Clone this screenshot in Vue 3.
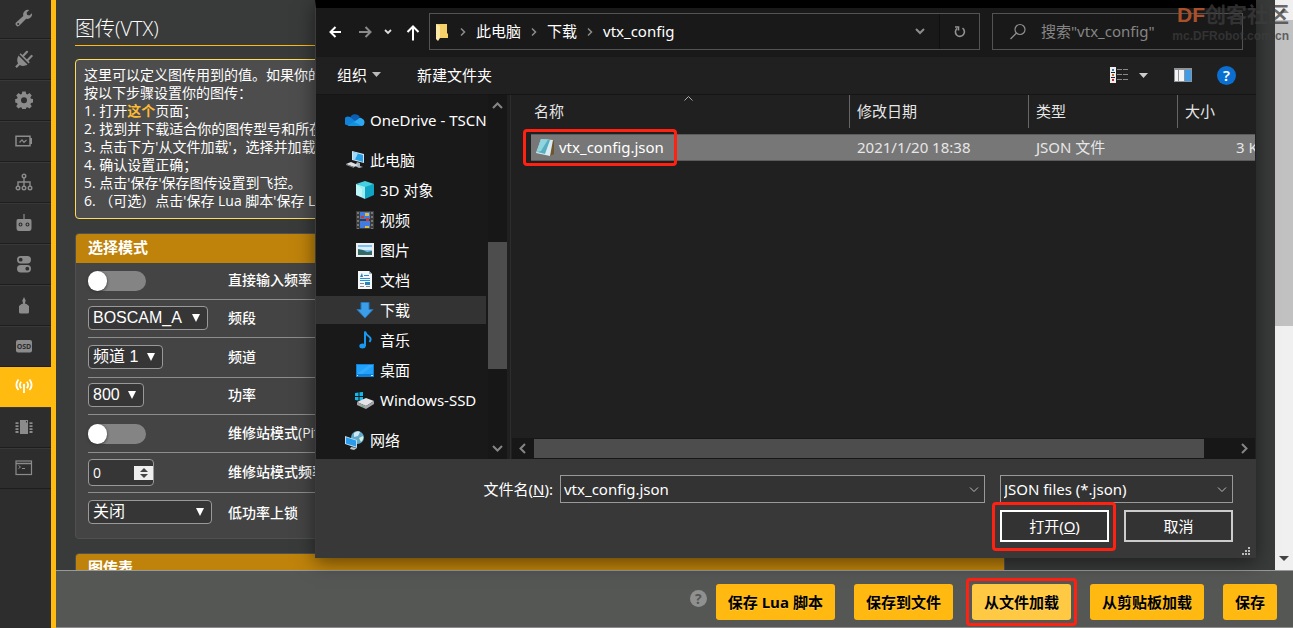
<script setup>
import { ref } from 'vue'

const tabs = ['wrench', 'plug', 'gear', 'battery', 'tree', 'robot', 'switches', 'servo', 'osd', 'antenna', 'chip', 'console']
const activeTab = ref('antenna')

const band = ref('BOSCAM_A')
const channel = ref('频道 1')
const power = ref('800')
const lowPower = ref('关闭')
const pitFreq = ref(0)
const directFreq = ref(false)
const pitMode = ref(false)

const places = [
  { icon: 'cloud', text: 'OneDrive - TSCN', kind: 'root' },
  { icon: 'pc', text: '此电脑', kind: 'root' },
  { icon: 'cube', text: '3D 对象' },
  { icon: 'film', text: '视频' },
  { icon: 'picture', text: '图片' },
  { icon: 'doc', text: '文档' },
  { icon: 'down', text: '下载', kind: 'selected' },
  { icon: 'music', text: '音乐' },
  { icon: 'desktop', text: '桌面' },
  { icon: 'drive', text: 'Windows-SSD' },
  { icon: 'network', text: '网络', kind: 'root' }
]
const fileName = ref('vtx_config.json')
</script>

<template>
  <div class="app">
    <nav class="sidebar">
      <button v-for="t in tabs" :key="t" class="tab" :class="{ active: t === activeTab }" :aria-label="t" @click="activeTab = t">
        <svg v-if="t === 'wrench'" width="18" height="18" viewBox="0 0 18 18"><path fill="currentColor" d="M17 4.2 14.3 6.500 12 5.800 11.700 3.500 14.300 1A4.800 4.800 0 0 0 8.300 6.900L1.300 13.300A2.200 2.200 0 0 0 4.500 16.600L11.200 9.800A4.800 4.800 0 0 0 17 4.200ZM3.200 14a1 1 0 1 1 0 2 1 1 0 0 1 0-2Z" /></svg>
        <svg v-else-if="t === 'plug'" width="18" height="18" viewBox="0 0 18 18"><path fill="currentColor" d="M3.500 5.500 12.500 14.500C9.500 16.500 6.500 16 4.800 15L1.800 18 0.200 16.400 3 13.400C1.800 11 2 8 3.500 5.500ZM4.500 4.300 5.700 3.200 14.800 12.300 13.600 13.500Z" /><path stroke="currentColor" stroke-width="2.200" stroke-linecap="round" d="M8 6 12 1.800M12.500 10.200 16.600 6" /></svg>
        <svg v-else-if="t === 'gear'" width="18" height="18" viewBox="0 0 18 18"><path fill="currentColor" fill-rule="evenodd" d="M7.300 0.500h3.400l.4 2.300 1.400.6 2-1.400 2.300 2.400-1.400 1.900.6 1.400 2.300.4v3.400l-2.300.4-.6 1.400 1.400 1.900-2.300 2.400-2-1.400-1.400.6-.4 2.300H7.300l-.4-2.300-1.400-.6-2 1.400-2.300-2.400 1.400-1.900-.6-1.400-1.800-.4V8.100L2 7.700l.6-1.400-1.400-1.900L3.500 2l2 1.400 1.400-.6ZM9 6.300a3 3 0 1 0 0 6 3 3 0 0 0 0-6Z" /></svg>
        <svg v-else-if="t === 'battery'" width="18" height="12" viewBox="0 0 18 12"><path fill="none" stroke="currentColor" stroke-width="1.500" d="M1 1.200H15V10.800H1Z" /><path fill="currentColor" d="M15 3h2v6h-2z" /><path fill="none" stroke="currentColor" stroke-width="1.200" d="M4.500 7.500 7 4.800 9 7.300 11.500 5" /></svg>
        <svg v-else-if="t === 'tree'" width="18" height="18" viewBox="0 0 18 18" fill="none" stroke="currentColor" stroke-width="1.400"><circle cx="9" cy="3" r="1.800" /><circle cx="3" cy="15" r="1.800" /><circle cx="9" cy="15" r="1.800" /><circle cx="15" cy="15" r="1.800" /><path d="M9 5v8M3 13V9h12v4" /></svg>
        <svg v-else-if="t === 'robot'" width="16" height="20" viewBox="0 0 16 20"><path fill="currentColor" fill-rule="evenodd" d="M7.400 1h1.200v5H14q1.500 0 1.500 2v7q0 3-2.500 3H3q-2.500 0-2.500-3V8Q.5 6 2 6h5.400ZM4.500 9.500a2 2 0 1 0 0 4 2 2 0 0 0 0-4Zm7 0a2 2 0 1 0 0 4 2 2 0 0 0 0-4Z" /><circle cx="4.500" cy="11.500" r=".9" fill="currentColor" /><circle cx="11.500" cy="11.500" r=".9" fill="currentColor" /></svg>
        <svg v-else-if="t === 'switches'" width="16" height="18" viewBox="0 0 16 18"><rect x="1" y="1" width="14" height="7.500" rx="3.700" fill="currentColor" /><rect x="1" y="10" width="14" height="7.500" rx="3.700" fill="currentColor" /><circle cx="4.700" cy="4.700" r="1.900" fill="#2d2d2d" /><circle cx="11.300" cy="13.700" r="1.900" fill="#2d2d2d" /></svg>
        <svg v-else-if="t === 'servo'" width="14" height="18" viewBox="0 0 14 18"><path fill="currentColor" d="M5.800 8V5.200H5L7 1l2 4.200h-.8V8h1.300l2.500 2v6q0 1.500-1.500 1.500h-7Q2 17.500 2 16v-6L4.500 8Z" /></svg>
        <svg v-else-if="t === 'osd'" width="18" height="14" viewBox="0 0 18 14"><rect x="1" y="1" width="16" height="12.500" rx="2" fill="currentColor" /><text x="9" y="10" text-anchor="middle" class="osd">OSD</text></svg>
        <svg v-else-if="t === 'antenna'" width="18" height="16" viewBox="0 0 18 16" fill="none" stroke="currentColor" stroke-width="1.800"><circle cx="9" cy="7" r="1.200" fill="currentColor" stroke="none" /><path d="M9 7v8M6.200 10.300Q3.500 7 6.200 3.700M11.800 10.300Q14.500 7 11.800 3.700M3.500 12Q-.8 7 3.500 1.500M14.500 12Q18.800 7 14.500 1.500" /></svg>
        <svg v-else-if="t === 'chip'" width="18" height="16" viewBox="0 0 18 16"><path fill="currentColor" fill-rule="evenodd" d="M5 1h8v14H5ZM11 2v1.500h1V2Z" /><path stroke="currentColor" stroke-width="1.800" d="M.5 4.200h3M.5 7.200h3M.5 10.200h3M.5 13h3M14.500 4.200h3M14.500 7.200h3M14.500 10.200h3M14.500 13h3" /></svg>
        <svg v-else width="18" height="16" viewBox="0 0 18 16" fill="none" stroke="currentColor"><rect x="1" y="1" width="15.500" height="13.500" stroke-width="1.200" /><path d="M1 3.500h15.500" stroke-width="1.500" /><path d="M3.500 5.500 5.500 7 3.500 8.500M7 8.500h3" /></svg>
      </button>
    </nav>

    <div class="column">
      <div class="view">
        <main class="content">
          <h1>图传(VTX)</h1>
          <div class="note">
            这里可以定义图传用到的值。如果你的图传支持<br />
            按以下步骤设置你的图传：<br />
            1. 打开<a href="#">这个</a>页面；<br />
            2. 找到并下载适合你的图传型号和所在地区的配置<br />
            3. 点击下方'从文件加载'，选择并加载图传设置<br />
            4. 确认设置正确；<br />
            5. 点击'保存'保存图传设置到飞控。<br />
            6. （可选）点击'保存 Lua 脚本'保存 Lua 设置
          </div>

          <section class="panel">
            <h2>选择模式</h2>
            <div class="rows">
              <div class="row short">
                <span class="ctl"><input id="direct" v-model="directFreq" type="checkbox" class="toggle" /></span>
                <label for="direct">直接输入频率</label>
              </div>
              <div class="row">
                <span class="ctl"><span class="pick band"><select id="band" v-model="band"><option>BOSCAM_A</option></select><svg width="8" height="8"><path d="M0 0h8L4 8z" fill="#fff" /></svg></span></span>
                <label for="band">频段</label>
              </div>
              <div class="row tall">
                <span class="ctl"><span class="pick channel"><select id="channel" v-model="channel"><option>频道 1</option></select><svg width="8" height="8"><path d="M0 0h8L4 8z" fill="#fff" /></svg></span></span>
                <label for="channel">频道</label>
              </div>
              <div class="row short">
                <span class="ctl"><span class="pick power"><select id="power" v-model="power"><option>800</option></select><svg width="8" height="8"><path d="M0 0h8L4 8z" fill="#fff" /></svg></span></span>
                <label for="power">功率</label>
              </div>
              <div class="row">
                <span class="ctl"><input id="pit" v-model="pitMode" type="checkbox" class="toggle" /></span>
                <label for="pit">维修站模式(Pit Mode)</label>
              </div>
              <div class="row tall">
                <span class="ctl"><span class="number"><input id="pitfreq" v-model="pitFreq" type="number" /><span class="spin"><svg width="8" height="10"><path d="M0 4 4 0l4 4zM0 6h8L4 10z" fill="#444" /></svg></span></span></span>
                <label for="pitfreq">维修站模式频率</label>
              </div>
              <div class="row last">
                <span class="ctl"><span class="pick low"><select id="low" v-model="lowPower"><option>关闭</option></select><svg width="8" height="8"><path d="M0 0h8L4 8z" fill="#fff" /></svg></span></span>
                <label for="low">低功率上锁</label>
              </div>
            </div>
          </section>

          <section class="panel">
            <h2>图传表</h2>
          </section>
        </main>
        <div class="scroll">
          <span class="cap"><svg width="10" height="5"><path d="M0 5h10L5 0z" fill="#8c8c8c" /></svg></span>
          <span class="thumb"></span>
          <span class="cap end"><svg width="10" height="5"><path d="M0 0h10L5 5z" fill="#444" /></svg></span>
        </div>
      </div>

      <footer class="footer">
        <span class="help">?</span>
        <button>保存 Lua 脚本</button>
        <button>保存到文件</button>
        <button class="hot">从文件加载<i class="mark"></i></button>
        <button>从剪贴板加载</button>
        <button>保存</button>
      </footer>
    </div>

    <div class="dialog" role="dialog" aria-label="vtx_config">
      <div class="address">
        <div class="arrows">
          <svg width="84" height="20" viewBox="0 0 84 20" fill="none" stroke="#fff" stroke-width="2"><path d="M12 10H1.500M6.500 5l-5 5 5 5" /></svg>
          <svg class="nav-rest" width="84" height="20" viewBox="0 0 84 20" fill="none" stroke-width="2"><path stroke="#8a8a8a" d="M0 10h11.500M6.500 5l5 5-5 5" /><path stroke="#ddd" stroke-width="1.800" d="M26 8l3 3 3-3" /><path stroke="#fff" d="M54 18.500V5M48.500 10l5.500-5.500 5.500 5.500" /></svg>
        </div>
        <div class="path">
          <svg class="folder" width="14" height="18" viewBox="0 0 14 18"><path fill="#f5cf68" d="M1 1h11v9l1 1v4H4z" /><path fill="#ffe9a6" d="M1 1l4 2v12l-2 3-2-2z" /></svg>
          <svg class="sep" width="6" height="8"><path d="M1 .5 4.500 4 1 7.500" /></svg><span>此电脑</span>
          <svg class="sep" width="6" height="8"><path d="M1 .5 4.500 4 1 7.500" /></svg><span>下载</span>
          <svg class="sep" width="6" height="8"><path d="M1 .5 4.500 4 1 7.500" /></svg><span class="here">vtx_config</span>
          <svg width="10" height="7" fill="none" stroke="#8c8c8c" stroke-width="2"><path d="M1 1l4 4 4-4" /></svg>
          <button class="refresh" aria-label="refresh"><svg width="12" height="13" viewBox="0 0 12 13" fill="none" stroke="#929292" stroke-width="1.600"><path d="M8.500 3.200A4.500 4.500 0 1 1 3.200 3.300" /><path d="M1 2h3.500v3.500" /></svg></button>
        </div>
        <div class="search">
          <svg width="18" height="18" viewBox="0 0 18 18" fill="none" stroke="#8f8f8f" stroke-width="1.200"><circle cx="11" cy="6.500" r="5" /><path d="M7.500 10 1.500 16" /></svg>
          <input type="text" aria-label="search" placeholder="搜索&quot;vtx_config&quot;" />
        </div>
      </div>

      <div class="tools">
        <button class="org">组织 <svg width="9" height="5"><path d="M0 0h9L4.500 5z" fill="#bbb" /></svg></button>
        <button>新建文件夹</button>
        <span class="grow"></span>
        <svg width="18" height="16" viewBox="0 0 18 16"><path fill="#eee" d="M0 0h6v16H0z" /><path fill="#202020" d="M1 5h4v1H1zM1 10h4v1H1z" /><path fill="#3c78a8" d="M2 2h2v2H2z" /><path fill="#b06a2c" d="M2 7h2v2H2z" /><path fill="#c22" d="M2 12h2v2H2z" /><path stroke="#888" stroke-dasharray="5 1" d="M7 2.500h11M7 7.500h11M7 12.500h11" /></svg>
        <svg class="view-caret" width="9" height="5"><path d="M0 0h9L4.500 5z" fill="#ccc" /></svg>
        <svg class="pane" width="18" height="14" viewBox="0 0 18 14"><path fill="#8f9498" d="M0 0h18v14H0z" /><path fill="#f4f4f4" d="M1 2h3v11H1zM5 2h5v11H5z" /><path fill="#3f9ce8" d="M11 2h6v11h-6z" /></svg>
        <span class="q">?</span>
      </div>

      <div class="browser">
        <div class="places">
          <a v-for="p in places" :key="p.text" href="#" class="place" :class="p.kind">
            <svg width="20" height="20" viewBox="0 0 20 20">
              <g v-if="p.icon === 'cloud'"><path fill="#0a5fb4" d="M5 8a5.500 5.500 0 0 1 10-1l-6 6-7 2z" /><path fill="#1182d8" d="M1 15A4.200 4.200 0 0 1 5 7l9 7z" /><path fill="#2ea8f0" d="M3 16l10-7q2-2 4-.5A4 4 0 0 1 17 16z" /><path fill="#1490df" d="M2 15q1 1 3 1h12l-8-4z" /></g>
              <g v-else-if="p.icon === 'pc'"><path fill="#d6e4ef" d="M7 1l12 3v9L7 10z" /><path fill="#249fe8" d="M8 2l10 3v7L8 9z" /><path fill="#9ed9fb" d="M8 2l5 1.500L10 9.500 8 9z" /><path fill="#aeb6bc" d="M12 12l3 1v3l3 1-4 1-4-2z" /><path fill="#dce1e4" d="M1 14l5-2 7 3-4 2z" /><path fill="#7e878d" d="M1 14l8 3v1l-8-3z" /></g>
              <g v-else-if="p.icon === 'cube'"><path fill="#9deef0" d="M1 4l9 2v13l-9-4z" /><path fill="#10a5c3" d="M19 4l-9 2v13l9-4z" /><path fill="#45cfe0" d="M1 4l9-3 9 3-9 3z" /><path fill="#d2fbfa" d="M1 4l6 5v8l-6-2z" opacity=".6" /></g>
              <g v-else-if="p.icon === 'film'"><path fill="#3c3c3c" d="M1 1h18v18H1z" /><path fill="#3f7be0" d="M5 2h10v7H5zM5 11h10v7H5z" /><path fill="#e8bb2c" d="M10 3h4v3h-4zM10 16h4v2h-4z" /><path fill="#d33b2e" d="M6 6h3v2H6zM11 8h3v3h-3z" /><path stroke="#8a8a8a" stroke-width="1.500" stroke-dasharray="2 2" d="M3 2v17M17 2v17" /></g>
              <g v-else-if="p.icon === 'picture'"><path fill="#eee" d="M1 3h18v14H1z" /><path fill="#7cc3f3" d="M3 5h14v10H3z" /><path fill="#dceefa" d="M3 7h14v3H3z" /><path fill="#326a68" d="M3 9l5 1 4 2 5-1v4H3z" /></g>
              <g v-else-if="p.icon === 'doc'"><path fill="#f4f6f8" d="M3 1h11l3 3v15H3z" /><path fill="#a9b6c0" d="M14 1l3 3h-3z" /><path stroke="#2591dc" d="M5 8.500h10M5 10.500h10M9 5.500h5" /><path stroke="#888" d="M5 13.500h4M5 16.500h4M11 16.500h4" /><path fill="#2a82bb" d="M10 12h5v3h-5zM5 7l2-4 1 4z" /></g>
              <g v-else-if="p.icon === 'down'"><path fill="#3c9ee9" stroke="#2277bb" d="M6 2.500h8v7h4L10 18 2 9.500h4z" /></g>
              <g v-else-if="p.icon === 'music'"><ellipse cx="7.500" cy="16" rx="3.200" ry="2.500" fill="#1799f2" /><path fill="none" stroke="#1799f2" stroke-width="2" d="M10 16V1.500q1 3 4 5t.5 5.500" /></g>
              <g v-else-if="p.icon === 'desktop'"><path fill="#0d7fd6" d="M1 4h18v13H1z" /><path fill="#22a1fa" d="M2 5h16v9H2z" /><path fill="#45b2ff" d="M2 14 14 5h4v1L7 14z" opacity=".5" /><path stroke="#cde8ff" d="M2 15.500h1M16 15.500h2" /></g>
              <g v-else-if="p.icon === 'drive'"><path fill="#15b8ea" d="M0 3l3.500-.5V6H0zM4.500 2.300 8 2v4H4.500zM0 7h3.500v3.500L0 10zM4.500 7H8v4l-3.500-.5z" /><path fill="#e2e4e6" d="M2 12l9-4 8 3-8 5z" /><path fill="#a2a6a9" d="M2 12l9 4v3l-9-4zM11 16l8-5v3l-8 5z" /><path fill="#35d04a" d="M7 15.500l2 1v1l-2-1z" /></g>
              <g v-else><circle cx="12.500" cy="7.500" r="6.500" fill="#62a8c8" /><path fill="#cdeaf2" d="M9 3q4-3 6-1l-2 4-4 1z" /><path fill="#d4f0dc" d="M14 8l4-2q1 3-2 6z" /><path fill="#b9dff8" d="M0 6l12 4v8L0 14z" /><path fill="#2a9ceb" d="M1 7.300l10 3.300v6L1 13.500z" /><path fill="#bfc6ca" d="M6 17l6 1-3 2-4-1z" /></g>
            </svg>
            <span>{{ p.text }}</span>
          </a>
        </div>
        <div class="vbar">
          <svg width="11" height="7" fill="none" stroke="#858585" stroke-width="2"><path d="M1 6l4.500-4.500L10 6" /></svg>
          <span></span>
          <svg width="11" height="7" fill="none" stroke="#858585" stroke-width="2"><path d="M1 1l4.500 4.500L10 1" /></svg>
        </div>
        <div class="files">
          <div class="table-box">
            <table>
              <colgroup><col class="c-name" /><col class="c-date" /><col class="c-type" /><col /></colgroup>
              <thead>
                <tr><th>名称<svg class="sort" width="9" height="5" fill="none" stroke="#aaa"><path d="M.5 4.500l4-4 4 4" /></svg></th><th>修改日期</th><th>类型</th><th>大小</th></tr>
              </thead>
              <tbody>
                <tr>
                  <td class="name"><svg width="20" height="20" viewBox="0 0 20 20"><path fill="#70552b" d="M17 3l2 1v13l-4 2z" /><path fill="#d7ecf2" d="M6 2l12 1-3 16-14-3z" /><path fill="#58aebf" d="M6 2l9 1-5 14-8-2z" /><path fill="#8fd5df" d="M6 2l7 .5L6 14l-4 1z" /></svg>vtx_config.json<i class="mark"></i></td>
                  <td>2021/1/20 18:38</td>
                  <td>JSON 文件</td>
                  <td class="size">3 KB</td>
                </tr>
              </tbody>
            </table>
          </div>
          <div class="hbar">
            <svg width="7" height="11" fill="none" stroke="#858585" stroke-width="2"><path d="M6 1 1.500 5.500 6 10" /></svg>
            <span></span>
            <svg width="7" height="11" fill="none" stroke="#858585" stroke-width="2"><path d="M1 1l4.500 4.500L1 10" /></svg>
          </div>
        </div>
      </div>

      <div class="bottom">
        <div class="line">
          <label for="fname">文件名(<u>N</u>):</label>
          <span class="box"><input id="fname" v-model="fileName" type="text" /><svg width="10" height="6" fill="none" stroke="#bbb"><path d="M1 .5l4 4 4-4" /></svg></span>
          <span class="box type"><select aria-label="type"><option>JSON files (*.json)</option></select><svg width="10" height="6" fill="none" stroke="#bbb"><path d="M1 .5l4 4 4-4" /></svg></span>
        </div>
        <div class="line acts">
          <button class="open">打开(<u>O</u>)<i class="mark"></i></button>
          <button>取消</button>
        </div>
        <svg class="grip" width="9" height="9"><path fill="#bbb" d="M6 0h2v2H6zM3 3h2v2H3zM6 3h2v2H6zM0 6h2v2H0zM3 6h2v2H3zM6 6h2v2H6z" /></svg>
      </div>
    </div>

    <div class="stamp">
      <div class="big"><b>DF</b>创客社区</div>
      <div class="small">mc.DFRobot.com.cn</div>
    </div>
  </div>
</template>

<style>
body { margin: 0; background: #393b3a; }
</style>

<style scoped>
.app, .app * { box-sizing: border-box; }
.app {
  position: relative;
  display: flex;
  height: 100vh;
  overflow: hidden;
  color: #fff;
  font-family: "Open Sans", "Noto Sans CJK SC", sans-serif;
  font-size: 14px;
}
button, input, select { font: inherit; color: inherit; border: 0; margin: 0; padding: 0; background: none; }
svg { display: block; flex: none; }
i.mark { position: absolute; border: 3px solid #ff2112; border-radius: 4px; pointer-events: none; }

.sidebar { width: 56px; flex: none; background: #2d2d2d; border-right: 5px solid #ffbb10; }
.tab {
  display: flex; align-items: center; justify-content: center;
  width: 100%; height: 41px; padding: 0 3px 2px 0;
  color: #8b8b8b; border-top: 1px solid #383838; border-bottom: 1px solid #1e1e1e;
}
.tab:first-child { height: 39px; padding-bottom: 2px; border-top: 0; }
.tab.active { height: 40px; background: #ffbb10; color: #fff; border-color: #ffbb10; }
.osd { font: bold 7px "Open Sans", sans-serif; fill: #2d2d2d; }

.column { flex: 1; min-width: 0; display: flex; flex-direction: column; }
.view { flex: 1; min-height: 0; display: flex; }
.content { flex: 1; min-width: 0; overflow: hidden; padding: 12px 19px 0; background: #393b3a; }
h1 { margin: 0 0 13px; height: 34px; line-height: 33px; font-size: 20px; font-weight: 300; border-bottom: 1px solid #ffbb10; }
.note {
  height: 160px; padding: 6px 8px; margin-bottom: 14px; overflow: hidden;
  line-height: 18px; white-space: nowrap;
  background: #4d4d4d; border: 1px solid #ffdb5c; border-radius: 4px;
}
.note a { color: #ffbb33; font-weight: 700; text-decoration: none; }

.panel { width: calc(100% - 251px); margin-bottom: 14px; background: #434443; border: 1px solid #4f504f; border-radius: 4px; overflow: hidden; }
h2 { margin: 0; padding: 0 12px; height: 29px; line-height: 27px; font-size: 15px; font-weight: 700; background: #bf830b; }
.rows { padding: 0 12px; }
.row { display: flex; align-items: center; height: 38px; border-bottom: 1px solid #8c8d8c; }
.row.short { height: 37px; }
.row.tall { height: 40px; }
.row.last { height: 45px; padding-bottom: 5px; border: 0; }
.ctl { width: 140px; flex: none; }
.row label { margin-bottom: 2px; white-space: nowrap; line-height: 20px; font-weight: 500; }
.row.last label { margin-bottom: 0; }
.toggle { appearance: none; display: block; width: 58px; height: 20px; border-radius: 10px; background: #848484; position: relative; }
.toggle::before { content: ""; display: block; width: 19px; height: 20px; border-radius: 10px; background: #fff; box-shadow: 0 1px 3px #333; }
.toggle:checked { background: #ffbb10; }
.pick { position: relative; display: block; height: 24px; margin-bottom: 2px; }
.pick select {
  appearance: none; display: block; width: 100%; height: 100%; padding: 0 4px;
  font: 16px/22px "Liberation Sans", "Noto Sans CJK SC", sans-serif;
  background: #363636; border: 1px solid #999; border-radius: 4px;
}
.pick svg { position: absolute; right: 8px; top: 8px; pointer-events: none; }
.band { width: 120px; }
.channel { width: 75px; }
.power { width: 56px; }
.low { width: 124px; }
.number { display: flex; align-items: center; width: 66px; height: 27px; background: #363636; border: 1px solid #999; border-radius: 4px; }
.number input { flex: 1; min-width: 0; padding-left: 4px; appearance: textfield; }
.number input::-webkit-inner-spin-button { appearance: none; }
.spin { display: flex; align-items: center; justify-content: center; width: 19px; height: 14px; background: #eee; }

.scroll { width: 18px; flex: none; display: flex; flex-direction: column; background: #f0f0f0; }
.cap { height: 20px; display: flex; align-items: center; justify-content: center; }
.cap.end { margin-top: auto; height: 24px; }
.thumb { height: 306px; background: #c1c1c1; }

.footer {
  position: relative; display: flex; align-items: center; justify-content: flex-end; gap: 19px;
  height: 58px; flex: none; padding: 6px 16px 0 0;
  background: #555755; border-top: 1px solid #989998; border-bottom: 1px solid #8c8c8c;
}
.footer button {
  position: relative; height: 36px; padding: 0 12px 2px; white-space: nowrap;
  font-size: 15px; font-weight: 700; color: #000; background: #ffb910; border-radius: 3px;
  text-shadow: 0 1px rgba(255, 255, 255, .25);
}
.footer .hot { background: #ffc943; }
.hot .mark { inset: -6px; }
.help { width: 17px; height: 17px; margin: 0 -10px 7px 0; border-radius: 9px; background: #8f908f; color: #555755; font-weight: 700; line-height: 17px; text-align: center; }

.dialog {
  position: absolute; left: 315px; right: 37px; top: 0;
  border-left: 1px solid #3b3b3b; border-top: 8px solid #000;
  background: #383838; box-shadow: 0 4px 18px rgba(0, 0, 0, .5);
  font-family: "Noto Sans", "Noto Sans CJK SC", sans-serif; font-size: 15px; line-height: 20px;
}
.address { display: flex; align-items: center; height: 49px; padding: 0 13px 2px; background: #191919; }
.arrows { width: 100px; display: grid; }
.arrows svg { grid-area: 1 / 1; }
.nav-rest { margin-left: 30px; }
.path { flex: 1; display: flex; align-items: center; height: 37px; padding-left: 5px; border: 1px solid #535353; white-space: nowrap; }
.path span { margin: 0 10px; padding-bottom: 2px; }
.path .here { flex: 1; }
.sep { fill: none; stroke: #8c8c8c; stroke-width: 1.5; }
.folder { margin-right: 11px; }
.refresh { display: flex; align-items: center; justify-content: center; width: 40px; height: 35px; margin-left: 14px; border-left: 1px solid #101010; }
.search { display: flex; align-items: center; gap: 14px; width: 251px; height: 37px; margin-left: 12px; padding-left: 16px; border: 1px solid #535353; }
.search input { flex: 1; min-width: 0; padding-bottom: 2px; }
.search input::placeholder { color: #858585; opacity: 1; }
.tools { display: flex; align-items: center; height: 37px; padding: 0 20px 1px 21px; background: #202020; }
.tools button { padding-bottom: 1px; white-space: nowrap; }
.tools .org { display: flex; align-items: center; gap: 5px; margin-right: 36px; }
.grow { flex: 1; }
.view-caret { margin: 0 26px 0 11px; }
.pane { margin-right: 25px; }
.q { width: 19px; height: 19px; line-height: 19px; border-radius: 10px; background: #0a6fd0; text-align: center; font-weight: 600; }

.browser { display: flex; height: 365px; border-top: 1px solid #151515; background: #202020; }
.places { width: 172px; flex: none; padding-top: 10px; background: #191919; overflow: hidden; }
.place { display: flex; align-items: center; gap: 5px; height: 28px; margin: 1px 2px 2px 0; padding-left: 39px; color: #fff; text-decoration: none; white-space: nowrap; overflow: hidden; }
.place.root { padding-left: 29px; margin-top: 1px; margin-right: 0; }
.place + .root { margin-top: 12px; }
.place.selected { background: #333; }
.vbar { width: 19px; flex: none; display: flex; flex-direction: column; align-items: center; padding: 7px 0; background: #171717; }
.vbar span { width: 19px; height: 127px; margin: 133px 0 auto; background: #4d4d4d; }
.files { flex: 1; min-width: 0; display: flex; flex-direction: column; margin: 0 1px 0 3px; border-left: 1px solid #2d2d2d; }
.table-box { flex: 1; padding-left: 20px; overflow: hidden; }
table { width: 100%; table-layout: fixed; border-spacing: 0; color: #e6e6e6; }
.c-name { width: 319px; }
.c-date { width: 179px; }
.c-type { width: 149px; }
th { position: relative; height: 39px; padding: 0 0 8px 7px; text-align: left; font-weight: 400; }
th:first-child { padding-left: 3px; }
th + th::before { content: ""; position: absolute; left: -1px; top: 0; width: 1px; height: 33px; background: #666; }
.sort { position: absolute; left: 153px; top: 1px; }
td { height: 27px; padding: 0 0 2px 7px; white-space: nowrap; background: #777; border: solid #5c5c5c; border-width: 1px 0; }
td.name { position: relative; display: flex; align-items: center; gap: 4px; padding-left: 4px; color: #fff; }
.name .mark { left: -8px; top: -6px; width: 154px; height: 37px; }
td.size { padding-left: 58px; overflow: hidden; }
.hbar { display: flex; align-items: center; height: 21px; margin-left: 1px; padding: 0 7px 1px; background: #171717; }
.hbar span { flex: 1; height: 19px; margin: 0 37px 0 8px; background: #4d4d4d; }

.bottom { position: relative; height: 99px; padding: 16px 23px 0 0; }
.line { display: flex; align-items: center; margin-bottom: 7px; }
.line label { width: 237px; text-align: right; margin-right: 7px; }
.box { position: relative; display: flex; align-items: center; flex: 1; height: 28px; background: #333; border: 1px solid #999; }
.box input, .box select { appearance: none; width: 100%; height: 26px; padding: 0 3px; }
.box svg { position: absolute; right: 5px; top: 11px; pointer-events: none; }
.box.type { flex: none; width: 233px; margin-left: 15px; }
.acts { justify-content: flex-end; gap: 15px; }
.acts button { position: relative; width: 109px; height: 32px; background: #333; border: 2px solid #ccc; }
.acts .open { border-color: #fff; }
.open .mark { inset: -10px -9px -11px -10px; }
.grip { position: absolute; right: 5px; bottom: 2px; }

.stamp { position: absolute; right: 4px; top: 3px; text-align: right; font-family: "Liberation Sans", "Noto Sans CJK SC", sans-serif; font-weight: 700; color: rgba(60, 60, 60, .75); pointer-events: none; }
.big { font-size: 21px; line-height: 24px; }
.big b { color: #a9502a; }
.small { font-size: 12px; line-height: 18px; }
</style>
